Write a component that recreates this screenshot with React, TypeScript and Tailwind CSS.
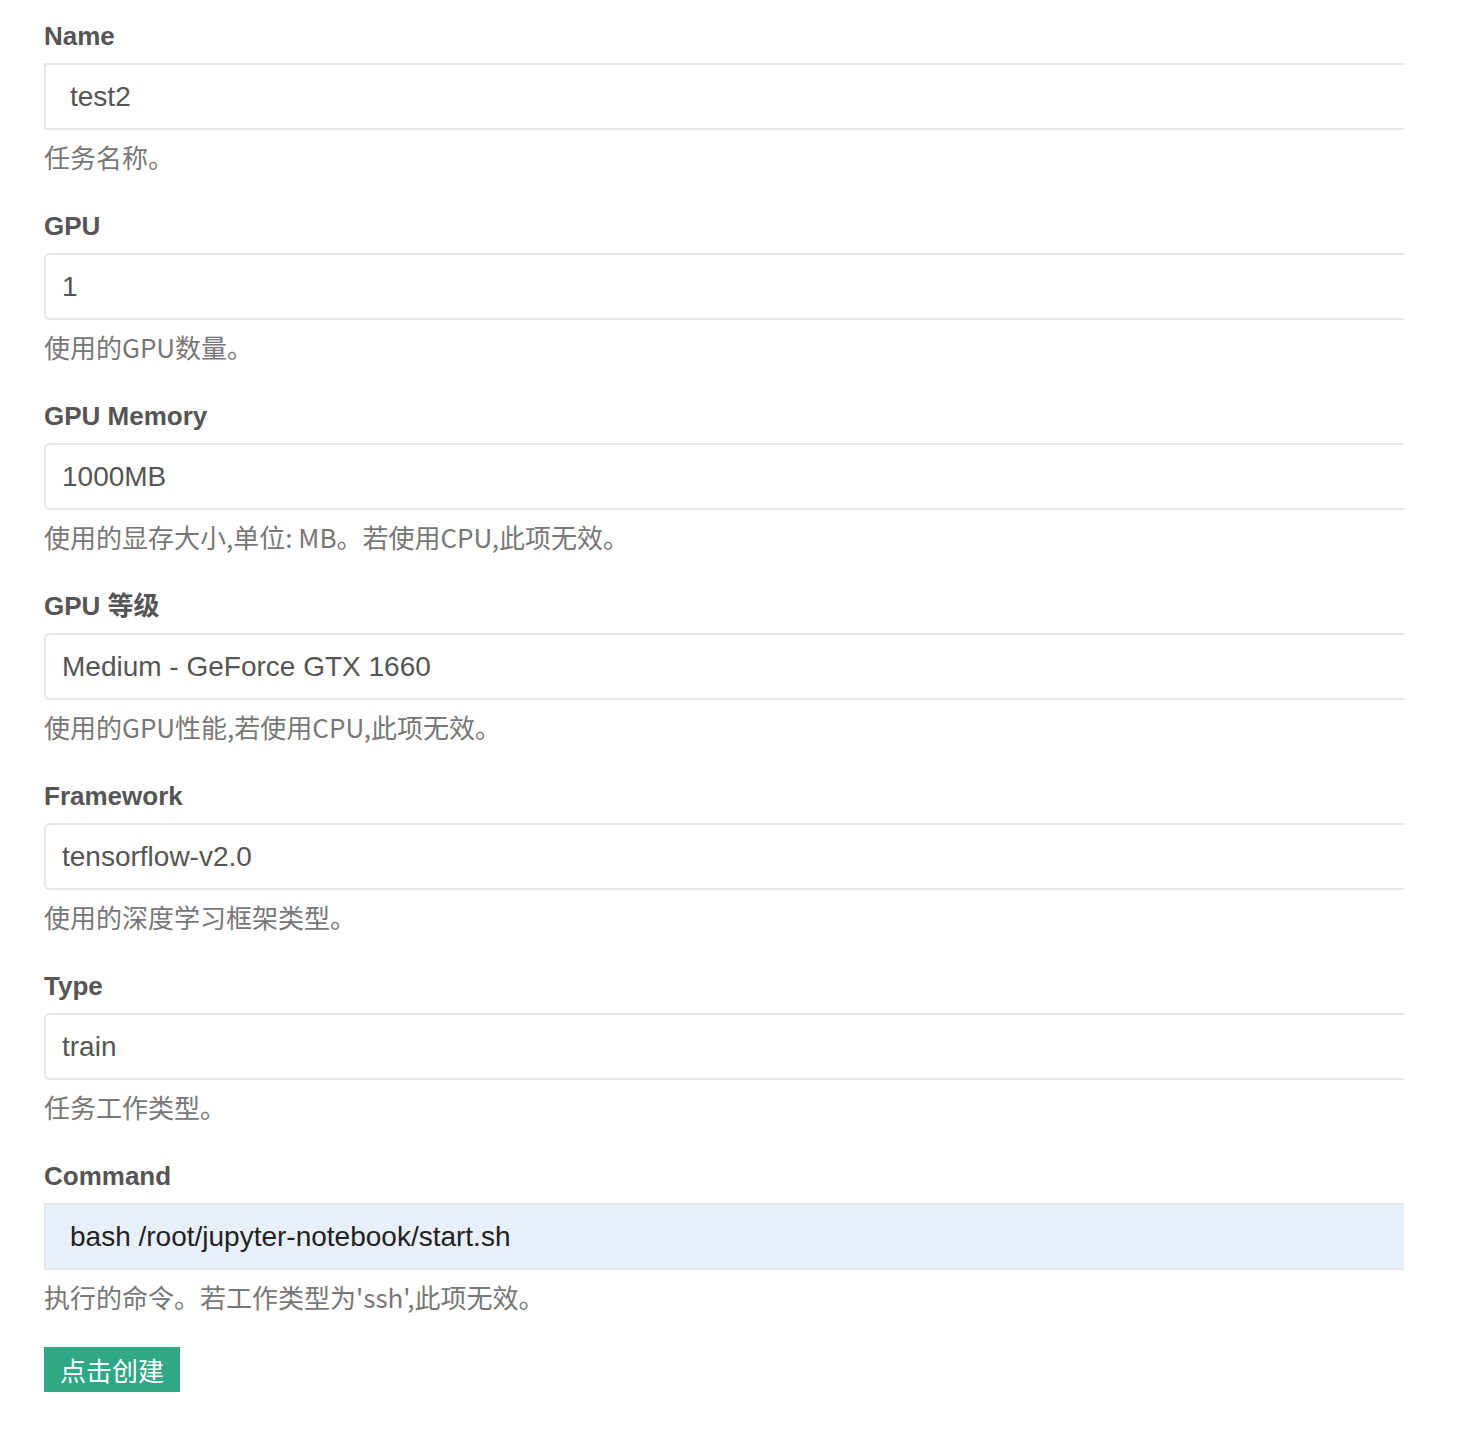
import React from 'react'

type Field = {
  label: string
  value: string
  help: string
  square?: boolean
  autofill?: boolean
}

const fields: Field[] = [
  { label: 'Name', value: 'test2', help: '任务名称。', square: true },
  { label: 'GPU', value: '1', help: '使用的GPU数量。' },
  { label: 'GPU Memory', value: '1000MB', help: '使用的显存大小,单位: MB。若使用CPU,此项无效。' },
  { label: 'GPU 等级', value: 'Medium - GeForce GTX 1660', help: '使用的GPU性能,若使用CPU,此项无效。' },
  { label: 'Framework', value: 'tensorflow-v2.0', help: '使用的深度学习框架类型。' },
  { label: 'Type', value: 'train', help: '任务工作类型。' },
  {
    label: 'Command',
    value: 'bash /root/jupyter-notebook/start.sh',
    help: "执行的命令。若工作类型为'ssh',此项无效。",
    square: true,
    autofill: true
  }
]

const FormField: React.FC<{ field: Field }> = ({ field }) => {
  return (
    <div className="mb-[33px]">
      <label className="block text-[26px] leading-[36px] font-bold text-[#555] mb-[9px]">
        {field.label}
      </label>
      <input
        readOnly
        value={field.value}
        className={`block w-[1360px] h-[67px] border-2 border-r-0 border-[#e6e6e6] text-[28px] outline-none ${
          field.square ? 'pl-[24px]' : 'pl-[16px] rounded-l-[6px]'
        } ${field.autofill ? 'bg-[#e8f0fe] text-[#222]' : 'bg-white text-[#555]'}`}
      />
      <p className="mt-[9px] text-[26px] leading-[36px] text-[#777] font-['Noto_Sans_CJK_SC',sans-serif]">
        {field.help}
      </p>
    </div>
  )
}

export default function App() {
  return (
    <div
      className="min-h-[1434px] bg-white pl-[44px] pt-[18px]"
      style={{ fontFamily: '"Liberation Sans", Arial, "Noto Sans CJK SC", sans-serif' }}
    >
      <form onSubmit={(e) => e.preventDefault()}>
        {fields.map((f) => (
          <FormField key={f.label} field={f} />
        ))}
        <button
          type="submit"
          className="-mt-[1px] w-[136px] h-[45px] bg-[#2fa886] text-white text-[26px] leading-[45px] text-center font-['Noto_Sans_CJK_SC',sans-serif]"
        >
          点击创建
        </button>
      </form>
    </div>
  )
}
